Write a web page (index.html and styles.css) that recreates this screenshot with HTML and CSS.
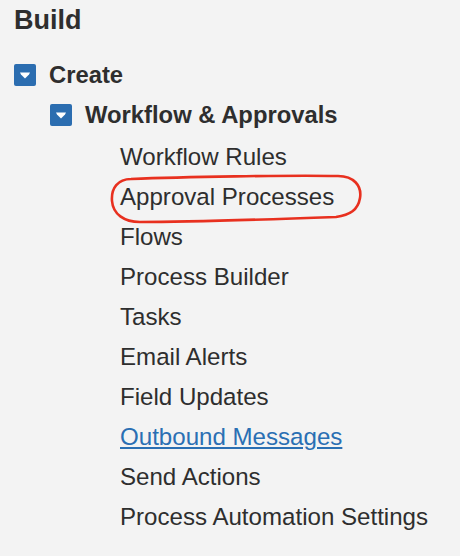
FILE: index.html
```html
<!DOCTYPE html>
<html>
<head>
<meta charset="utf-8">
<link rel="stylesheet" href="styles.css">
</head>
<body>
<div class="panel">
  <h1 class="title">Build</h1>
  <div class="node">
    <div class="node-head level1">
      <span class="toggle"><svg viewBox="0 0 22 22" width="22" height="22"><path d="M6 8.5 H16 L15 10.5 L11 14.5 L7 10.5 Z" fill="#fff"/></svg></span>
      <span class="head-label">Create</span>
    </div>
    <div class="node level2">
      <div class="node-head">
        <span class="toggle"><svg viewBox="0 0 22 22" width="22" height="22"><path d="M6 8.5 H16 L15 10.5 L11 14.5 L7 10.5 Z" fill="#fff"/></svg></span>
        <span class="head-label">Workflow &amp; Approvals</span>
      </div>
      <ul class="items">
        <li>Workflow Rules</li>
        <li>Approval Processes</li>
        <li>Flows</li>
        <li>Process Builder</li>
        <li>Tasks</li>
        <li>Email Alerts</li>
        <li>Field Updates</li>
        <li><a class="link" href="#">Outbound Messages</a></li>
        <li>Send Actions</li>
        <li>Process Automation Settings</li>
      </ul>
    </div>
  </div>
  <svg class="annotation" viewBox="0 0 460 556" width="460" height="556">
    <path d="M131 179 C 180 177, 290 175, 338 176 C 354 176, 362 186, 360 198 C 358 210, 350 215, 336 217 C 280 219, 190 222, 140 222 C 124 222, 113 214, 112 201 C 111 188, 118 179, 131 179 Z" fill="none" stroke="#e8301f" stroke-width="2.6" stroke-linejoin="round"/>
  </svg>
</div>
</body>
</html>
```

FILE: styles.css
```css
html, body {
  margin: 0;
  padding: 0;
  background: #f3f3f3;
}

.panel {
  position: relative;
  width: 460px;
  height: 556px;
  padding-left: 14px;
  box-sizing: border-box;
  font-family: "Liberation Sans", Arial, sans-serif;
  color: #2e2e2e;
  overflow: hidden;
}

.title {
  margin: 0 0 15px 0;
  font-size: 27px;
  font-weight: bold;
  line-height: 40px;
}

.node-head {
  display: flex;
  align-items: center;
  height: 40px;
  gap: 13px;
}

.toggle {
  display: block;
  width: 22px;
  height: 22px;
  border-radius: 2px;
  background: #2b6db0;
  flex: none;
}

.toggle svg {
  display: block;
}

.head-label {
  font-size: 23.8px;
  font-weight: bold;
  line-height: 40px;
}

.level2 {
  margin-left: 36px;
}

.items {
  list-style: none;
  margin: 1.5px 0 0 70px;
  padding: 0;
}

.items li {
  font-size: 24.1px;
  line-height: 40px;
  white-space: nowrap;
}

.link {
  color: #2a6fb3;
  text-decoration: underline;
  text-underline-offset: 2px;
}

.annotation {
  position: absolute;
  left: 0;
  top: 0;
  pointer-events: none;
}
```
